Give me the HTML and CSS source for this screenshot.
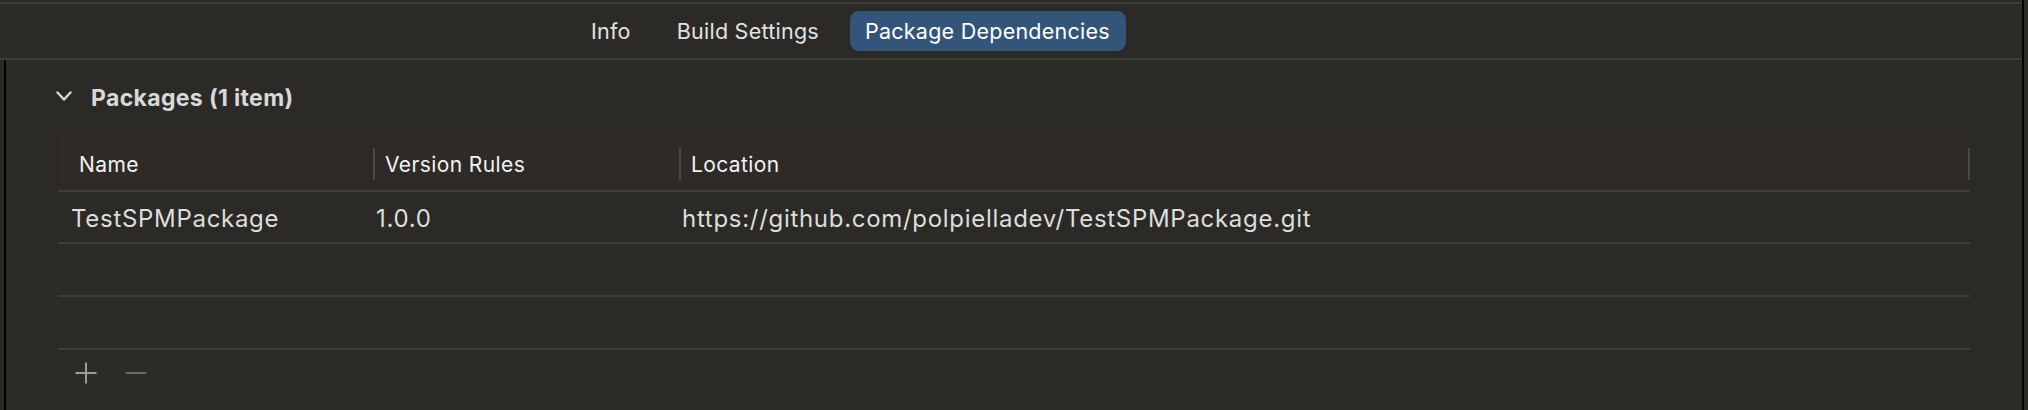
FILE: index.html
```html
<!DOCTYPE html>
<html>
<head>
<meta charset="utf-8">
<link rel="stylesheet" href="styles.css">
</head>
<body>
<div class="frame">
  <div class="topline"></div>
  <div class="tabbar">
    <div class="tab">Info</div>
    <div class="tab">Build Settings</div>
    <div class="tab active">Package Dependencies</div>
  </div>
  <div class="content">
    <div class="section-title">
      <svg class="chevron" width="16" height="11" viewBox="0 0 16 11"><path d="M1.5 1.5 L8 8.5 L14.5 1.5" fill="none" stroke="#d6d6d6" stroke-width="2.4" stroke-linecap="round" stroke-linejoin="round"/></svg>
      <span>Packages (1 item)</span>
    </div>
    <div class="table">
      <div class="thead">
        <div class="th c1">Name</div>
        <div class="th c2">Version Rules</div>
        <div class="th c3">Location</div>
      </div>
      <div class="tr">
        <div class="td c1">TestSPMPackage</div>
        <div class="td c2">1.0.0</div>
        <div class="td c3">https://github.com/polpielladev/TestSPMPackage.git</div>
      </div>
      <div class="tr empty"></div>
      <div class="tr empty"></div>
    </div>
    <div class="footer">
      <svg class="btn" width="22" height="22" viewBox="0 0 22 22"><path d="M11 0.5 V21.5 M0.5 11 H21.5" stroke="#9c9c9c" stroke-width="2"/></svg>
      <svg class="btn" width="22" height="22" viewBox="0 0 22 22"><path d="M0.5 11 H21.5" stroke="#6a6966" stroke-width="2"/></svg>
    </div>
  </div>
</div>
</body>
</html>
```
FILE: styles.css
```css
html, body {
  margin: 0;
  padding: 0;
  background: #2c2a27;
  width: 2028px;
  height: 410px;
  overflow: hidden;
  font-family: Inter, "Noto Sans", sans-serif;
}
.frame {
  width: 2022px;
  height: 410px;
  border-right: 2px solid #000;
  box-sizing: content-box;
}
.topline {
  height: 2px;
  border-bottom: 2px solid #3f3d3a;
}
.tabbar {
  height: 54px;
  border-bottom: 2px solid #3f3d3a;
  display: flex;
  align-items: center;
  gap: 16px;
  padding-left: 576px;
  box-sizing: content-box;
}
.tab {
  height: 40px;
  line-height: 40px;
  padding: 0 15px;
  font-size: 21.5px;
  letter-spacing: 0.25px;
  color: #e2e2e2;
  border-radius: 9px;
  white-space: nowrap;
}
.tab.active {
  background: #34557a;
  color: #ffffff;
  padding: 0 16px 0 15px;
}
.content {
  margin-left: 4px;
  border-left: 2px solid #000;
  height: 350px;
}
.section-title {
  height: 73px;
  display: flex;
  align-items: center;
  padding-left: 50px;
  gap: 19px;
  font-weight: 700;
  font-size: 23px;
  letter-spacing: 0.35px;
  color: #d9d9d9;
  box-sizing: border-box;
}
.section-title span {
  position: relative;
  top: 1px;
}
.table {
  margin-left: 52px;
  width: 1912px;
}
.thead {
  height: 57px;
  background: #2e2a27;
  border-bottom: 2px solid #403e3b;
  display: grid;
  grid-template-columns: 315px 306px 1fr;
  align-items: center;
}
.th {
  font-size: 21px;
  letter-spacing: 0.4px;
  color: #f2f2f2;
  height: 32px;
  line-height: 34px;
  padding-left: 12px;
  margin-top: 5px;
}
.th.c1 { padding-left: 21px; }
.th.c2, .th.c3 { border-left: 2px solid #4b4946; padding-left: 10px; }
.th.c3 { border-right: 2px solid #4b4946; }
.tr {
  height: 51px;
  border-bottom: 2px solid #403e3b;
  display: grid;
  grid-template-columns: 315px 306px 1fr;
  align-items: center;
}
.tr:nth-child(2) { height: 50px; }
.td {
  font-size: 24px;
  letter-spacing: 0.7px;
  color: #dddddd;
  padding-left: 3px;
  padding-top: 2px;
  white-space: nowrap;
}
.td.c1 { padding-left: 13px; }
.footer {
  display: flex;
  gap: 28px;
  padding-left: 69px;
  padding-top: 12px;
}
.btn { display: block; }
```
